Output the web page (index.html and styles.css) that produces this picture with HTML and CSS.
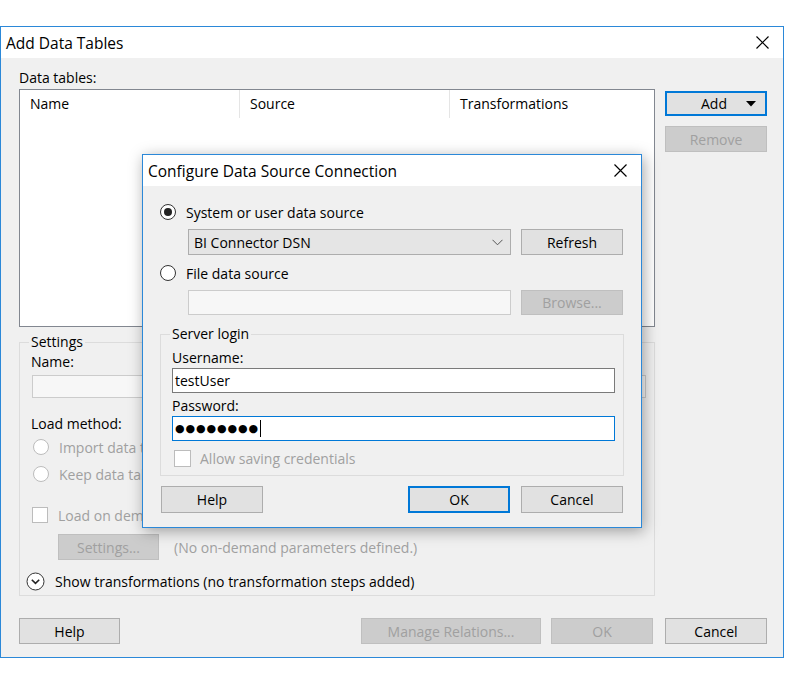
FILE: index.html
```html
<!DOCTYPE html>
<html lang="en">

<head>
    <meta charset="UTF-8">
    <title>Add Data Tables</title>
    <link rel="stylesheet" href="styles.css">
</head>

<body>
    <div class="window">
        <div class="titlebar">
            <span>Add Data Tables</span>
            <svg class="close" width="13" height="13" viewBox="0 0 13 13">
                <path d="M0.5 0.5 L12.5 12.5 M12.5 0.5 L0.5 12.5" stroke="#000" stroke-width="1.2" fill="none" />
            </svg>
        </div>
        <div class="main">
            <div class="top">
                <div class="label">Data tables:</div>
                <div></div>
                <div class="list">
                    <div class="list-head">
                        <span class="col col-name">Name</span>
                        <span class="col col-source">Source</span>
                        <span class="col">Transformations</span>
                    </div>
                </div>
                <div class="side">
                    <div class="btn btn-default btn-add">
                        <span>Add</span>
                        <svg width="10" height="6" viewBox="0 0 10 6">
                            <path d="M0 0 L10 0 L5 5.5 Z" fill="#000" />
                        </svg>
                    </div>
                    <div class="btn btn-off btn-remove">Remove</div>
                </div>
            </div>

            <fieldset class="group settings">
                <legend>Settings</legend>
                <div class="label">Name:</div>
                <div class="textbox textbox-off name-box"></div>
                <div class="label load-label">Load method:</div>
                <div class="option off first-opt"><span class="radio"></span>Import data table</div>
                <div class="option off"><span class="radio"></span>Keep data table external</div>
                <div class="option off check-opt"><span class="check"></span>Load on demand</div>
                <div class="param-row">
                    <div class="btn btn-off">Settings...</div>
                    <span class="muted">(No on-demand parameters defined.)</span>
                </div>
                <div class="option expand">
                    <svg width="19" height="19" viewBox="0 0 19 19">
                        <circle cx="9.5" cy="9.5" r="8.5" stroke="#333" stroke-width="1" fill="#fff" />
                        <path d="M5.8 7.8 L9.5 11.4 L13.2 7.8" stroke="#222" stroke-width="1.6" fill="none" />
                    </svg>
                    Show transformations (no transformation steps added)
                </div>
            </fieldset>

            <div class="footer">
                <div class="btn">Help</div>
                <div class="btn btn-off btn-manage">Manage Relations...</div>
                <div class="btn btn-off">OK</div>
                <div class="btn">Cancel</div>
            </div>
        </div>

        <div class="dialog">
            <div class="titlebar dialog-title">
                <span>Configure Data Source Connection</span>
                <svg class="close" width="13" height="13" viewBox="0 0 13 13">
                    <path d="M0.5 0.5 L12.5 12.5 M12.5 0.5 L0.5 12.5" stroke="#000" stroke-width="1.2" fill="none" />
                </svg>
            </div>
            <div class="dialog-body">
                <div class="option first-opt"><span class="radio on"></span>System or user data source</div>
                <div class="source-row">
                    <div class="combo">
                        <span>BI Connector DSN</span>
                        <svg width="11" height="7" viewBox="0 0 11 7">
                            <path d="M0.5 0.8 L5.5 5.8 L10.5 0.8" stroke="#555" stroke-width="1" fill="none" />
                        </svg>
                    </div>
                    <div class="btn">Refresh</div>
                </div>
                <div class="option second-opt"><span class="radio"></span>File data source</div>
                <div class="source-row file-row">
                    <div class="textbox textbox-off"></div>
                    <div class="btn btn-off">Browse...</div>
                </div>

                <fieldset class="group login">
                    <legend>Server login</legend>
                    <div class="label user-label">Username:</div>
                    <div class="textbox">testUser</div>
                    <div class="label pass-label">Password:</div>
                    <div class="textbox textbox-focus"><span class="dots">●●●●●●●●</span><span class="caret"></span></div>
                    <div class="option off save-opt"><span class="check"></span>Allow saving credentials</div>
                </fieldset>

                <div class="dialog-foot">
                    <div class="btn">Help</div>
                    <div class="btn btn-default btn-ok">OK</div>
                    <div class="btn">Cancel</div>
                </div>
            </div>
        </div>
    </div>
</body>

</html>
```

FILE: styles.css
```css
body {
    margin: 0;
    padding-top: 26px;
    background: #fff;
    color: #000;
    font-family: "Open Sans", "Noto Sans", sans-serif;
    font-size: 14px;
}

.window {
    position: relative;
    width: 782px;
    height: 630px;
    border: 1px solid #2b88d8;
}

.titlebar {
    display: flex;
    align-items: center;
    justify-content: space-between;
    height: 31px;
    padding: 0 14px 0 5px;
    background: #fff;
    font-size: 15.5px;
}

.main {
    box-sizing: border-box;
    height: 599px;
    padding: 10px 16px 0 18px;
    background: #f0f0f0;
}

.label {
    height: 20px;
    line-height: 20px;
    white-space: nowrap;
}

.top {
    display: grid;
    grid-template-columns: 636px 102px;
    column-gap: 10px;
}

.top > .label {
    margin-bottom: 1px;
}

/* list of data tables */
.list {
    box-sizing: border-box;
    height: 238px;
    border: 1px solid #828790;
    background: #fff;
}

.list-head {
    display: flex;
    height: 28px;
}

.col {
    box-sizing: border-box;
    padding-left: 10px;
    line-height: 28px;
}

.col-name {
    width: 220px;
    border-right: 1px solid #e5e5e5;
}

.col-source {
    width: 210px;
    border-right: 1px solid #e5e5e5;
}

/* buttons */
.btn {
    box-sizing: border-box;
    display: flex;
    align-items: center;
    justify-content: center;
    width: 102px;
    height: 26px;
    border: 1px solid #adadad;
    background: #e1e1e1;
    white-space: nowrap;
}

.btn-default {
    border: 2px solid #0078d7;
}

.btn-off {
    border-color: #bfbfbf;
    background: #cccccc;
    color: #a0a0a0;
}

.side {
    padding-top: 2px;
}

.btn-add {
    position: relative;
    height: 25px;
}

.btn-add span {
    margin-left: -4px;
}

.btn-add svg {
    position: absolute;
    right: 9px;
    top: 8px;
}

.btn-remove {
    margin-top: 10px;
}

/* group boxes */
.group {
    box-sizing: border-box;
    margin: 0;
    border: 1px solid #dcdcdc;
    min-width: 0;
}

.group legend {
    height: 18px;
    line-height: 18px;
    padding: 0 2px;
    margin-left: -2px;
}

.settings {
    width: 636px;
    height: 263px;
    margin-top: 6px;
    padding: 0 8px 0 11px;
}

.settings legend + .label {
    margin-top: 1px;
}

.textbox {
    box-sizing: border-box;
    height: 25px;
    padding-left: 2px;
    border: 1px solid #7a7a7a;
    background: #fff;
    line-height: 23px;
    display: flex;
    align-items: center;
}

.textbox-off {
    border-color: #cccccc;
    background: #f7f7f7;
}

.textbox-focus {
    border-color: #0078d7;
}

.name-box {
    width: 614px;
    height: 23px;
    margin: 3px 0 0 1px;
}

.load-label {
    margin-top: 16px;
}

.option {
    display: flex;
    align-items: center;
    height: 20px;
    white-space: nowrap;
}

.off {
    color: #a0a0a0;
}

.radio {
    box-sizing: border-box;
    position: relative;
    width: 16px;
    height: 16px;
    margin-right: 10px;
    border: 1px solid #333;
    border-radius: 50%;
    background: #fff;
}

.off .radio {
    border-color: #bcbcbc;
}

.radio.on::after {
    content: "";
    position: absolute;
    left: 3px;
    top: 3px;
    width: 8px;
    height: 8px;
    border-radius: 50%;
    background: #222;
}

.check {
    box-sizing: border-box;
    width: 16px;
    height: 16px;
    margin-right: 10px;
    border: 1px solid #bcbcbc;
    background: #fff;
}

.settings .first-opt {
    margin-top: 3px;
    padding-left: 2px;
}

.settings .first-opt + .option {
    margin-top: 7px;
    padding-left: 2px;
}

.check-opt {
    margin-top: 21px;
    padding-left: 1px;
}

.param-row {
    display: flex;
    align-items: center;
    gap: 15px;
    margin: 9px 0 0 27px;
}

.param-row .btn {
    width: 101px;
}

.muted {
    color: #a0a0a0;
}

.expand {
    margin: 11px 0 0 -5px;
}

.expand svg {
    margin-right: 10px;
}

.footer {
    display: flex;
    margin-top: 22px;
}

.footer .btn:first-child {
    width: 101px;
}

.btn-manage {
    width: 180px;
    margin-left: auto;
    margin-right: 10px;
}

.footer .btn:last-child {
    margin-left: 12px;
}

/* overlaid dialog */
.dialog {
    position: absolute;
    left: 141px;
    top: 127px;
    box-sizing: border-box;
    width: 500px;
    height: 374px;
    border: 1px solid #2b88d8;
    background: #f0f0f0;
    box-shadow: 2px 3px 14px rgba(0, 0, 0, .35);
}

.dialog-title {
    padding-right: 14px;
}

.dialog-body {
    padding: 16px 18px 0 17px;
}

.source-row {
    display: grid;
    grid-template-columns: 1fr 102px;
    column-gap: 10px;
    margin: 7px 0 0 28px;
}

.combo {
    box-sizing: border-box;
    display: flex;
    align-items: center;
    justify-content: space-between;
    height: 26px;
    padding: 0 7px 0 5px;
    border: 1px solid #adadad;
    background: #e5e5e5;
}

.second-opt {
    margin-top: 8px;
}

.file-row {
    margin-top: 7px;
}

.file-row .btn {
    height: 25px;
}

.login {
    width: 464px;
    height: 151px;
    margin-top: 10px;
    padding: 0 8px 0 11px;
}

.user-label {
    margin-top: 5px;
}

.pass-label {
    margin-top: 3px;
}

.login .textbox {
    width: 443px;
}

.dots {
    font-family: "DejaVu Sans", sans-serif;
    font-size: 11px;
    letter-spacing: 0.9px;
}

.caret {
    width: 1px;
    height: 17px;
    margin-left: 1px;
    background: #000;
}

.save-opt {
    margin-top: 7px;
    padding-left: 2px;
}

.save-opt .check {
    width: 17px;
    height: 17px;
    margin-right: 9px;
}

.dialog-foot {
    display: flex;
    margin-top: 10px;
}

.dialog-foot .btn {
    height: 27px;
}

.dialog-foot .btn:first-child {
    margin-left: 1px;
}

.btn-ok {
    margin-left: auto;
    margin-right: 11px;
}
```
